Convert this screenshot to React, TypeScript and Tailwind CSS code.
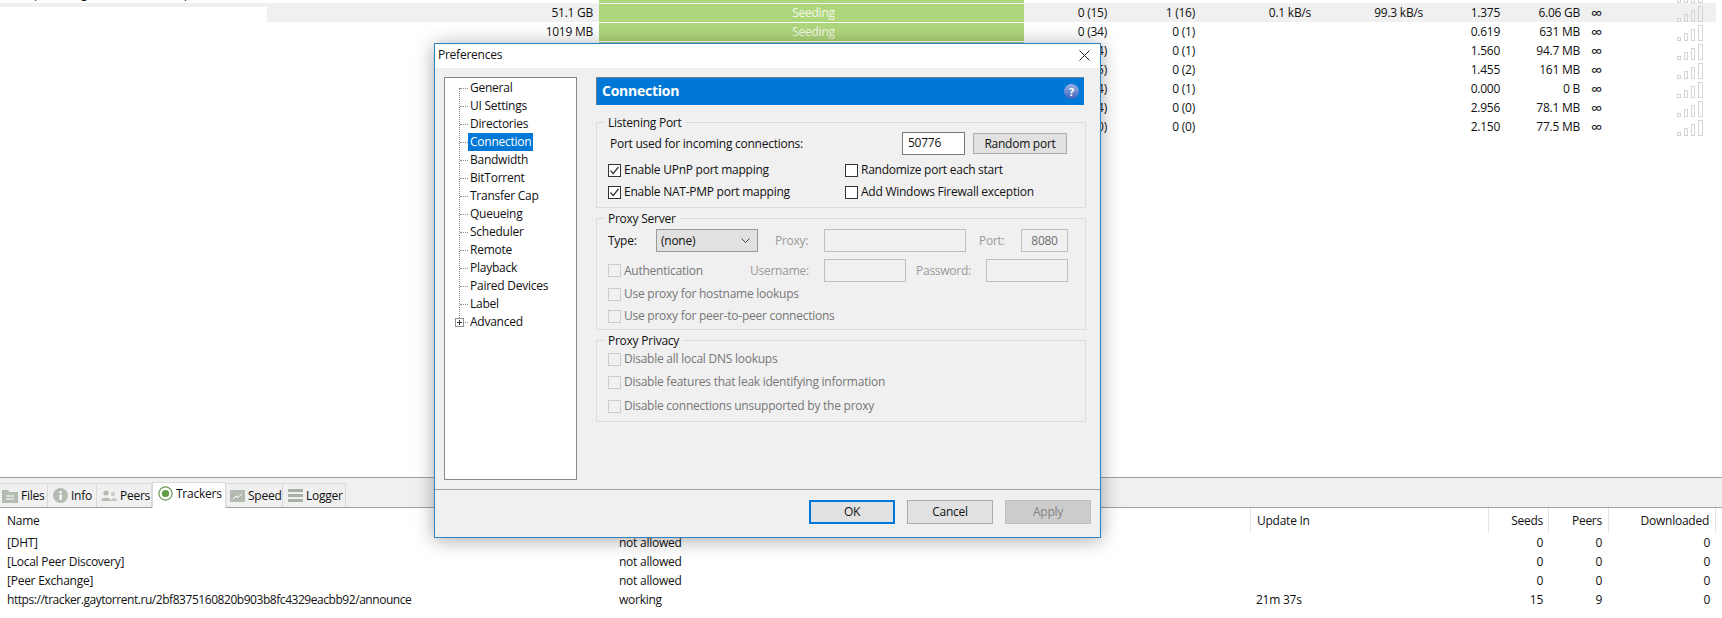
import React from "react"

const torrents = [
  { size: "51.1 GB", seeds: "0 (15)", peers: "1 (16)", down: "0.1 kB/s", up: "99.3 kB/s", ratio: "1.375", uploaded: "6.06 GB" },
  { size: "1019 MB", seeds: "0 (34)", peers: "0 (1)", down: "", up: "", ratio: "0.619", uploaded: "631 MB" },
  { size: "", seeds: "0 (14)", peers: "0 (1)", down: "", up: "", ratio: "1.560", uploaded: "94.7 MB" },
  { size: "", seeds: "0 (15)", peers: "0 (2)", down: "", up: "", ratio: "1.455", uploaded: "161 MB" },
  { size: "", seeds: "0 (14)", peers: "0 (1)", down: "", up: "", ratio: "0.000", uploaded: "0 B" },
  { size: "", seeds: "0 (14)", peers: "0 (0)", down: "", up: "", ratio: "2.956", uploaded: "78.1 MB" },
  { size: "", seeds: "0 (10)", peers: "0 (0)", down: "", up: "", ratio: "2.150", uploaded: "77.5 MB" },
]

const trackers = [
  { name: "[DHT]", status: "not allowed", update: "", seeds: "0", peers: "0", downloaded: "0" },
  { name: "[Local Peer Discovery]", status: "not allowed", update: "", seeds: "0", peers: "0", downloaded: "0" },
  { name: "[Peer Exchange]", status: "not allowed", update: "", seeds: "0", peers: "0", downloaded: "0" },
  {
    name: "https://tracker.gaytorrent.ru/2bf8375160820b903b8fc4329eacbb92/announce",
    status: "working",
    update: "21m 37s",
    seeds: "15",
    peers: "9",
    downloaded: "0",
  },
]

const prefItems = [
  "General",
  "UI Settings",
  "Directories",
  "Connection",
  "Bandwidth",
  "BitTorrent",
  "Transfer Cap",
  "Queueing",
  "Scheduler",
  "Remote",
  "Playback",
  "Paired Devices",
  "Label",
  "Advanced",
]

function Signal() {
  return (
    <div className="flex items-end gap-[3px] h-[17px] ml-[76px] mt-[2px]">
      <div className="w-[4px] h-[4px] border border-[#d4d4d4]" />
      <div className="w-[4px] h-[8px] border border-[#d4d4d4]" />
      <div className="w-[4px] h-[12px] border border-[#d4d4d4]" />
      <div className="w-[5px] h-[16px] border border-[#d4d4d4]" />
    </div>
  )
}

function TorrentRow({ t, active, first }: { t: (typeof torrents)[number]; active?: boolean; first?: boolean }) {
  return (
    <div className={`flex h-[19px] w-[1716px] items-center ${active ? "bg-[#f0f0f0]" : ""}`}>
      <div className="w-[593px] h-full flex items-end justify-between shrink-0">
        {first && <div className="w-[267px] h-[15px] bg-white" />}
        <span className="ml-auto self-center">{t.size}</span>
      </div>
      <div className="ml-[6px] w-[425px] h-[18px] mt-px bg-[#aed67a] shrink-0 pl-[4px] text-center text-[#f4f8ea]">Seeding</div>
      <div className="w-[83px] text-right shrink-0">{t.seeds}</div>
      <div className="w-[88px] text-right shrink-0">{t.peers}</div>
      <div className="w-[116px] text-right shrink-0">{t.down}</div>
      <div className="w-[112px] text-right shrink-0">{t.up}</div>
      <div className="w-[77px] text-right shrink-0">{t.ratio}</div>
      <div className="w-[80px] text-right shrink-0">{t.uploaded}</div>
      <div className="w-[21px] pl-[11px] shrink-0 text-[16px] leading-none">∞</div>
      <Signal />
    </div>
  )
}

function SliverRow() {
  return (
    <div className="flex h-[19px] w-[1716px] items-center">
      <div className="w-[599px] flex shrink-0 pl-[34px] gap-[40px]">
        <span>p</span>
        <span className="font-bold">g</span>
        <span className="ml-[56px]">p</span>
      </div>
      <div className="w-[425px] h-[18px] bg-[#aed67a] shrink-0" />
      <div className="ml-[577px]">
        <Signal />
      </div>
    </div>
  )
}

function Check({ checked, disabled, label }: { checked?: boolean; disabled?: boolean; label: string }) {
  return (
    <div className={`flex items-center h-[20px] ${disabled ? "text-[#777777]" : ""}`}>
      <div
        className={`w-[13px] h-[13px] border flex items-center justify-center shrink-0 ${
          disabled ? "border-[#cccccc]" : "border-[#333333] bg-white"
        }`}
      >
        {checked && (
          <svg width="11" height="11" viewBox="0 0 11 11" fill="none">
            <path d="M1.5 5.5 L4.2 8.5 L9.5 2" stroke="#333333" strokeWidth="1.2" />
          </svg>
        )}
      </div>
      <span className="ml-[3px] whitespace-nowrap">{label}</span>
    </div>
  )
}

function Group({ title, className, children }: { title: string; className: string; children: React.ReactNode }) {
  return (
    <div className={`relative w-[490px] border border-[#dcdcdc] pl-[11px] ${className}`}>
      <span className="absolute left-[7px] -top-[9px] bg-[#f0f0f0] px-[4px] leading-[18px]">{title}</span>
      {children}
    </div>
  )
}

function DisabledInput({ className, value }: { className: string; value?: string }) {
  return (
    <div className={`h-[23px] border border-[#bfbfbf] text-[#6d6d6d] flex items-center justify-center shrink-0 ${className}`}>
      {value}
    </div>
  )
}

function DialogButton({ label, className }: { label: string; className: string }) {
  return <div className={`w-[86px] h-[24px] flex items-center justify-center ${className}`}>{label}</div>
}

function PrefTree() {
  return (
    <div className="relative w-[133px] h-[403px] ml-[9px] mt-[9px] bg-white border border-[#828790] pt-[1px] shrink-0">
      <div className="absolute left-[14px] top-[10px] h-[234px] border-l border-dotted border-[#8a8a8a]" />
      {prefItems.map((item) => (
        <div key={item} className="relative flex items-center h-[18px] pl-[15px]">
          {item === "Advanced" && (
            <div className="absolute left-[10px] top-[5px] w-[9px] h-[9px] border border-[#919191] bg-white flex items-center justify-center">
              <svg width="7" height="7" viewBox="0 0 7 7">
                <path d="M1 3.5 H6 M3.5 1 V6" stroke="#333333" />
              </svg>
            </div>
          )}
          <div className="w-[8px] border-t border-dotted border-[#8a8a8a]" />
          <span className={`px-[2px] h-[18px] leading-[18px] whitespace-nowrap ${item === "Connection" ? "bg-[#0078d7] text-white" : ""}`}>
            {item}
          </span>
        </div>
      ))}
    </div>
  )
}

function PrefDialog() {
  return (
    <div className="absolute left-[434px] top-[43px] w-[667px] h-[495px] border border-[#2f82c4] bg-[#f0f0f0] shadow-[0_2px_18px_rgba(0,0,0,0.35)] flex flex-col">
      <div className="h-[24px] bg-white flex items-center justify-between pl-[3px] pr-[10px] pb-[2px] shrink-0">
        <span>Preferences</span>
        <svg width="11" height="11" viewBox="0 0 11 11" fill="none">
          <path d="M0.5 0.5 L10.5 10.5 M10.5 0.5 L0.5 10.5" stroke="#222222" />
        </svg>
      </div>

      <div className="flex h-[421px] shrink-0">
        <PrefTree />
        <div className="ml-[19px] mt-[9px] w-[490px]">
          <div className="w-[488px] h-[28px] bg-[#0078d7] border-t border-l border-[#6b7f92] flex items-center justify-between pl-[5px] pr-[5px] text-white">
            <span className="text-[14px] font-bold pb-[2px]">Connection</span>
            <div className="w-[15px] h-[15px] rounded-full bg-gradient-to-b from-[#9db2e6] to-[#3d64bd] flex items-center justify-center text-[11px] font-bold leading-none">
              ?
            </div>
          </div>

          <Group title="Listening Port" className="mt-[17px] h-[86px] pt-[9px]">
            <div className="flex items-center h-[23px]">
              <span className="w-[294px] pl-[2px] shrink-0">Port used for incoming connections:</span>
              <div className="w-[63px] h-[23px] border border-[#7a7a7a] bg-white pl-[5px] leading-[19px]">50776</div>
              <div className="ml-[8px] w-[94px] h-[21px] bg-[#e1e1e1] border border-[#adadad] flex items-center justify-center">
                Random port
              </div>
            </div>
            <div className="flex mt-[5px]">
              <div className="w-[237px] flex flex-col gap-[2px]">
                <Check checked label="Enable UPnP port mapping" />
                <Check checked label="Enable NAT-PMP port mapping" />
              </div>
              <div className="flex flex-col gap-[2px]">
                <Check label="Randomize port each start" />
                <Check label="Add Windows Firewall exception" />
              </div>
            </div>
          </Group>

          <Group title="Proxy Server" className="mt-[10px] h-[112px] pt-[10px]">
            <div className="flex items-center h-[23px]">
              <span className="w-[48px] shrink-0">Type:</span>
              <div className="w-[102px] h-[23px] bg-[#e1e1e1] border border-[#999999] flex items-center justify-between pl-[4px] pr-[7px] shrink-0">
                <span>(none)</span>
                <svg width="9" height="5" viewBox="0 0 9 5" fill="none">
                  <path d="M0.5 0.5 L4.5 4.5 L8.5 0.5" stroke="#444444" />
                </svg>
              </div>
              <span className="ml-[17px] w-[49px] shrink-0 text-[#9a9a9a]">Proxy:</span>
              <DisabledInput className="w-[142px]" />
              <span className="ml-[13px] w-[42px] shrink-0 text-[#9a9a9a]">Port:</span>
              <DisabledInput className="w-[47px]" value="8080" />
            </div>
            <div className="flex items-center h-[23px] mt-[7px]">
              <div className="w-[142px] shrink-0">
                <Check disabled label="Authentication" />
              </div>
              <span className="w-[74px] shrink-0 text-[#9a9a9a]">Username:</span>
              <DisabledInput className="w-[82px]" />
              <span className="ml-[10px] w-[70px] shrink-0 text-[#9a9a9a]">Password:</span>
              <DisabledInput className="w-[82px]" />
            </div>
            <div className="mt-[2px] flex flex-col gap-[2px]">
              <Check disabled label="Use proxy for hostname lookups" />
              <Check disabled label="Use proxy for peer-to-peer connections" />
            </div>
          </Group>

          <Group title="Proxy Privacy" className="mt-[10px] h-[82px] pt-[8px]">
            <Check disabled label="Disable all local DNS lookups" />
            <div className="mt-[3px]">
              <Check disabled label="Disable features that leak identifying information" />
            </div>
            <div className="mt-[4px]">
              <Check disabled label="Disable connections unsupported by the proxy" />
            </div>
          </Group>
        </div>
      </div>

      <div className="border-t border-[#a0a0a0] flex justify-end gap-[12px] pt-[10px] pr-[9px]">
        <DialogButton label="OK" className="bg-[#e1e1e1] border-2 border-[#0078d7]" />
        <DialogButton label="Cancel" className="bg-[#e1e1e1] border border-[#adadad]" />
        <DialogButton label="Apply" className="bg-[#cccccc] border border-[#bfbfbf] text-[#838383]" />
      </div>
    </div>
  )
}

function FilesIcon() {
  return (
    <svg width="16" height="14" viewBox="0 0 16 14">
      <path d="M0 1 H6 L7.5 3 H16 V14 H0 Z" fill="#b4bbb0" />
      <path d="M4 7 H12 M4 10 H12" stroke="#e8ebe6" strokeWidth="1.4" />
    </svg>
  )
}

function InfoIcon() {
  return (
    <svg width="15" height="15" viewBox="0 0 15 15">
      <circle cx="7.5" cy="7.5" r="7.5" fill="#b4bbb0" />
      <rect x="6.5" y="6.5" width="2.2" height="5.5" fill="#ffffff" />
      <rect x="6.5" y="3" width="2.2" height="2.2" fill="#ffffff" />
    </svg>
  )
}

function PeersIcon() {
  return (
    <svg width="16" height="12" viewBox="0 0 16 12">
      <circle cx="5" cy="3" r="2.6" fill="#b4bbb0" />
      <path d="M0 11 C0 6.5 10 6.5 10 11 Z" fill="#b4bbb0" />
      <circle cx="12" cy="4" r="2.1" fill="#c6cbc3" />
      <path d="M10 11 C10.5 7 16 7 16 11 Z" fill="#c6cbc3" />
    </svg>
  )
}

function TrackersIcon() {
  return (
    <svg width="15" height="15" viewBox="0 0 15 15">
      <circle cx="7.5" cy="7.5" r="6.6" fill="#ffffff" stroke="#6a9a52" strokeWidth="1.2" />
      <circle cx="7.5" cy="7.5" r="3.6" fill="#5f9e3c" />
    </svg>
  )
}

function SpeedIcon() {
  return (
    <svg width="15" height="12" viewBox="0 0 15 12">
      <rect width="15" height="12" fill="#b4bbb0" />
      <path d="M3 9 L6 6 L8 7.5 L12 3.5" stroke="#ffffff" fill="none" />
    </svg>
  )
}

function LoggerIcon() {
  return (
    <svg width="15" height="14" viewBox="0 0 15 14">
      <rect y="0" width="15" height="3" fill="#a8b0a3" />
      <rect y="5" width="15" height="3" fill="#a8b0a3" />
      <rect y="10" width="15" height="3" fill="#a8b0a3" />
    </svg>
  )
}

function Tab({ icon, label, className }: { icon: React.ReactNode; label: string; className: string }) {
  return (
    <div className={`h-[24px] flex items-center border-t border-r border-[#d9d9d9] shrink-0 ${className}`}>
      <div className="w-[16px] flex justify-center shrink-0">{icon}</div>
      <span className="ml-[3px]">{label}</span>
    </div>
  )
}

function TabStrip() {
  return (
    <div className="h-[31px] bg-[#f0f0f0] border-t border-b border-[#a0a0a0] flex items-end shrink-0">
      <Tab icon={<FilesIcon />} label="Files" className="w-[48px] pl-[2px]" />
      <Tab icon={<InfoIcon />} label="Info" className="w-[49px] pl-[4px]" />
      <Tab icon={<PeersIcon />} label="Peers" className="w-[55px] pl-[4px]" />
      <div className="h-[26px] w-[74px] -mb-px bg-white border-t border-x border-[#d9d9d9] flex items-center pl-[5px] pb-[4px] shrink-0">
        <TrackersIcon />
        <span className="ml-[3px]">Trackers</span>
      </div>
      <Tab icon={<SpeedIcon />} label="Speed" className="w-[57px] pl-[3px]" />
      <Tab icon={<LoggerIcon />} label="Logger" className="w-[63px] pl-[4px]" />
    </div>
  )
}

function TrackerList() {
  return (
    <div>
      <div className="flex h-[25px] items-center">
        <div className="w-[619px] pl-[7px] shrink-0">Name</div>
        <div className="w-[631px] shrink-0">Status</div>
        <div className="w-[238px] h-full pl-[6px] border-l border-[#e5e5e5] flex items-center shrink-0">Update In</div>
        <div className="w-[60px] h-full pr-[5px] border-l border-[#e5e5e5] flex items-center justify-end shrink-0">Seeds</div>
        <div className="w-[60px] h-full pr-[6px] border-l border-[#e5e5e5] flex items-center justify-end shrink-0">Peers</div>
        <div className="w-[108px] h-full pr-[6px] border-x border-[#e5e5e5] flex items-center justify-end shrink-0">Downloaded</div>
      </div>
      {trackers.map((t) => (
        <div key={t.name} className="flex h-[19px] items-center">
          <div className={`w-[619px] pl-[7px] shrink-0 whitespace-nowrap ${t.name.startsWith("https") ? "tracking-[-0.45px]" : ""}`}>
            {t.name}
          </div>
          <div className="w-[631px] shrink-0">{t.status}</div>
          <div className="w-[238px] pl-[6px] shrink-0">{t.update}</div>
          <div className="w-[60px] pr-[5px] text-right shrink-0">{t.seeds}</div>
          <div className="w-[60px] pr-[6px] text-right shrink-0">{t.peers}</div>
          <div className="w-[108px] pr-[6px] text-right shrink-0">{t.downloaded}</div>
        </div>
      ))}
    </div>
  )
}

export default function App() {
  return (
    <div className="relative h-[618px] w-full overflow-hidden bg-white text-[#111111] font-['Open_Sans',sans-serif] text-[12px] tracking-[-0.25px] flex flex-col">
      <div className="h-[477px] shrink-0 overflow-hidden">
        <div className="-mt-[16px]">
          <SliverRow />
          {torrents.map((t, i) => (
            <TorrentRow key={i} t={t} active={i === 0} first={i === 0} />
          ))}
        </div>
      </div>
      <TabStrip />
      <TrackerList />
      <PrefDialog />
    </div>
  )
}
